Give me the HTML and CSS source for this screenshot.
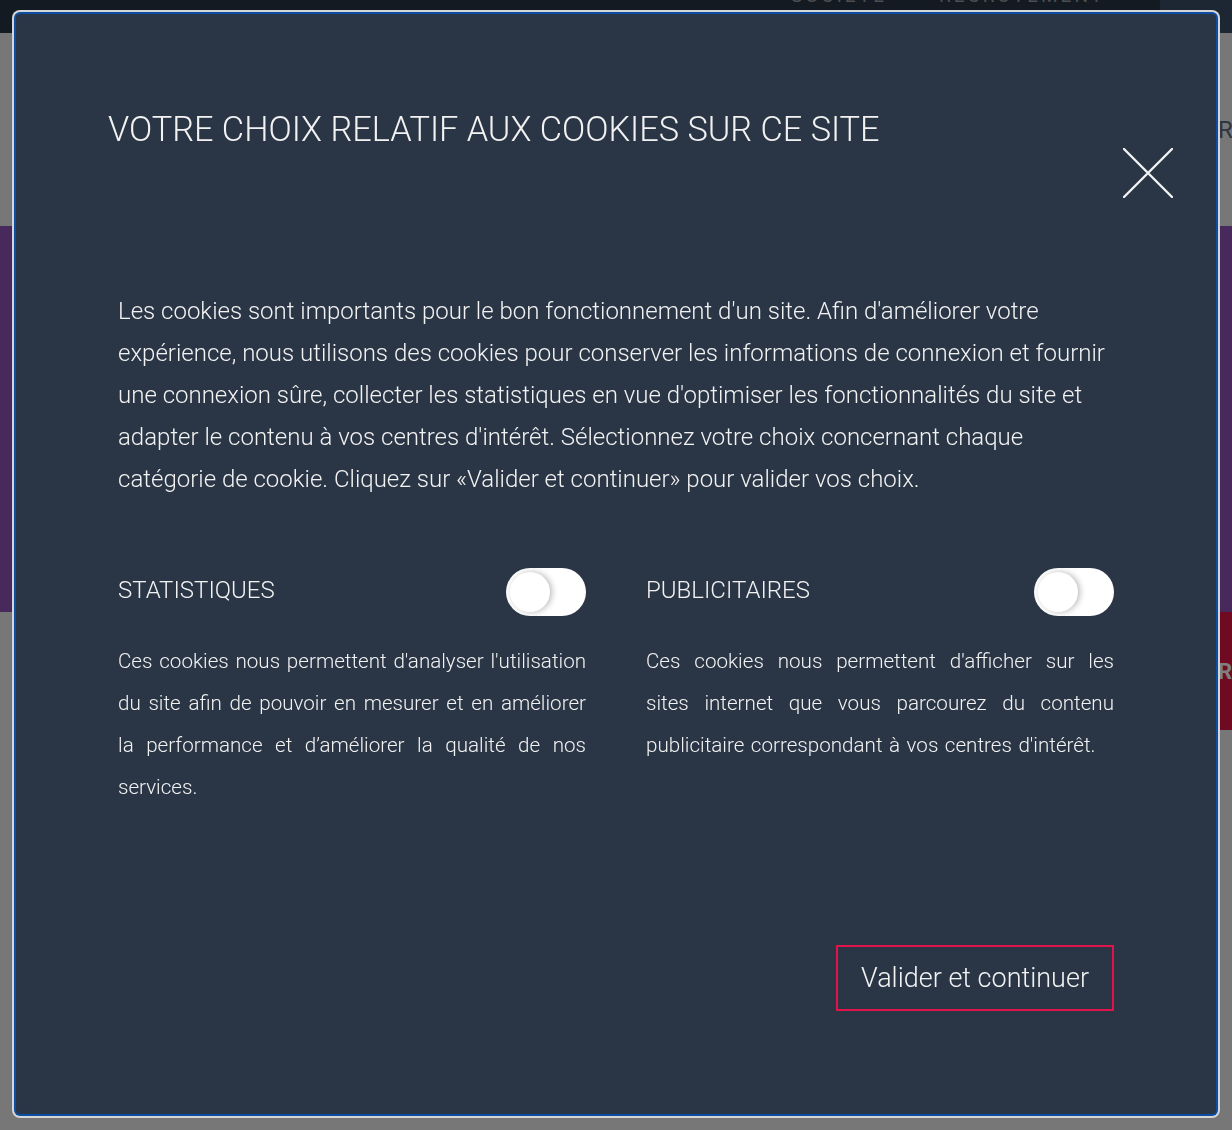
FILE: index.html
```html
<!DOCTYPE html>
<html lang="fr">
<head>
    <meta charset="UTF-8">
    <meta name="viewport" content="width=device-width, initial-scale=1.0">
    <title>Choix des cookies</title>
    <link rel="stylesheet" href="styles.css">
</head>
<body>
    <div class="site">
        <header class="topbar">
            <nav class="topnav">
                <span>Société</span>
                <span>Recrutement</span>
            </nav>
            <div class="topbar-side"></div>
        </header>
        <div class="subnav">
            <span class="subnav-item">Rechercher</span>
        </div>
        <section class="hero"></section>
        <div class="promo-row">
            <div class="promo-spacer"></div>
            <div class="promo">
                <span class="promo-label">Rubriques</span>
            </div>
        </div>
        <div class="page-rest"></div>
    </div>

    <div class="overlay"></div>

    <div class="modal" role="dialog" aria-labelledby="cookieTitle">
        <button class="close" aria-label="Fermer">
            <svg width="50" height="50" viewBox="0 0 50 50">
                <path d="M1 1 L49 49 M49 1 L1 49" stroke="#f2f2f2" stroke-width="2.4" stroke-linecap="round" fill="none"/>
            </svg>
        </button>

        <h1 id="cookieTitle" class="modal-title">Votre choix relatif aux cookies sur ce site</h1>

        <p class="intro">
            Les cookies sont importants pour le bon fonctionnement d'un site. Afin d'améliorer votre
            expérience, nous utilisons des cookies pour conserver les informations de connexion et fournir
            une connexion sûre, collecter les statistiques en vue d'optimiser les fonctionnalités du site et
            adapter le contenu à vos centres d'intérêt. Sélectionnez votre choix concernant chaque
            catégorie de cookie. Cliquez sur «Valider et continuer» pour valider vos choix.
        </p>

        <div class="categories">
            <div class="category">
                <div class="category-head">
                    <span class="category-name">Statistiques</span>
                    <label class="toggle">
                        <input type="checkbox">
                        <span class="knob"></span>
                    </label>
                </div>
                <p class="category-text">Ces cookies nous permettent d'analyser l'utilisation du site afin de pouvoir en mesurer et en améliorer la performance et d’améliorer la qualité de nos services.</p>
            </div>
            <div class="category">
                <div class="category-head">
                    <span class="category-name">Publicitaires</span>
                    <label class="toggle">
                        <input type="checkbox">
                        <span class="knob"></span>
                    </label>
                </div>
                <p class="category-text">Ces cookies nous permettent d'afficher sur les sites internet que vous parcourez du contenu publicitaire correspondant à vos centres d'intérêt.</p>
            </div>
        </div>

        <div class="actions">
            <button class="validate">Valider et continuer</button>
        </div>
    </div>
</body>
</html>
```

FILE: styles.css
```css
html, body {
    margin: 0;
    padding: 0;
}
body {
    font-family: Roboto, "Liberation Sans", Arial, sans-serif;
    background-color: #eeeeee;
    height: 1130px;
    overflow: hidden;
}

/* page behind the dialog */
.topbar {
    height: 33px;
    background-color: #263444;
    display: flex;
    justify-content: flex-end;
    overflow: hidden;
}
.topnav {
    display: flex;
    gap: 52px;
    margin-top: -16px;
    margin-right: 55px;
    color: #9a9ea4;
    font-size: 19px;
    letter-spacing: 3px;
    text-transform: uppercase;
}
.topbar-side {
    width: 72px;
    background-color: #3a4e66;
}
.subnav {
    height: 193px;
    display: flex;
    justify-content: flex-end;
    align-items: center;
    overflow: hidden;
}
.subnav-item {
    width: 14px;
    overflow: hidden;
    color: #5a6a7e;
    font-size: 24px;
}
.hero {
    height: 386px;
    background-color: #8e54b6;
}
.promo-row {
    display: flex;
    height: 118px;
}
.promo-spacer {
    flex: 1;
}
.promo {
    width: 50%;
    background-color: #e01446;
    display: flex;
    justify-content: flex-end;
    align-items: center;
    overflow: hidden;
}
.promo-label {
    width: 14px;
    overflow: hidden;
    color: #ffffff;
    font-weight: 700;
    font-size: 22px;
    text-transform: uppercase;
    white-space: nowrap;
}
.overlay {
    position: fixed;
    inset: 0;
    background: rgba(0, 0, 0, 0.5);
}

/* dialog */
.modal {
    position: fixed;
    top: 14px;
    left: 16px;
    width: 1200px;
    height: 1100px;
    box-sizing: border-box;
    padding: 95px 102px 103px;
    background-color: #2a3646;
    border-radius: 4px;
    box-shadow: 0 0 0 2px #0b4ea4, 0 0 0 4px #d6d6d6;
    color: #f2f2f2;
    display: flex;
    flex-direction: column;
}
.close {
    position: absolute;
    top: 134px;
    right: 43px;
    padding: 0;
    border: none;
    background: none;
    cursor: pointer;
    line-height: 0;
}
.modal-title {
    margin: 0 0 0 -10px;
    font-size: 34.3px;
    line-height: 40px;
    font-weight: 300;
    text-transform: uppercase;
}
.intro {
    margin: 141px 0 0;
    font-size: 24px;
    line-height: 42px;
    font-weight: 300;
}
.categories {
    display: grid;
    grid-template-columns: 1fr 1fr;
    column-gap: 60px;
    margin-top: 68px;
}
.category-head {
    display: flex;
    justify-content: space-between;
    align-items: center;
    height: 48px;
}
.category-name {
    font-size: 24px;
    text-transform: uppercase;
    font-weight: 300;
    margin-top: -4px;
}
.toggle {
    position: relative;
    width: 80px;
    height: 48px;
    border-radius: 24px;
    background: #ffffff;
    cursor: pointer;
}
.toggle input {
    display: none;
}
.knob {
    position: absolute;
    top: 4px;
    left: 4px;
    width: 40px;
    height: 40px;
    border-radius: 50%;
    background: #ffffff;
    box-shadow: 2px 0 6px rgba(0, 0, 0, 0.28);
}
.category-text {
    margin: 24px 0 0;
    font-size: 20.6px;
    line-height: 42px;
    font-weight: 300;
    word-spacing: 1.5px;
    text-align: justify;
}
.actions {
    margin-top: auto;
    display: flex;
    justify-content: flex-end;
}
.validate {
    height: 66px;
    padding: 0 23px;
    border: 2px solid #e2134b;
    background: transparent;
    color: #f2f2f2;
    font-family: inherit;
    font-size: 27px;
    font-weight: 300;
    cursor: pointer;
}
```
